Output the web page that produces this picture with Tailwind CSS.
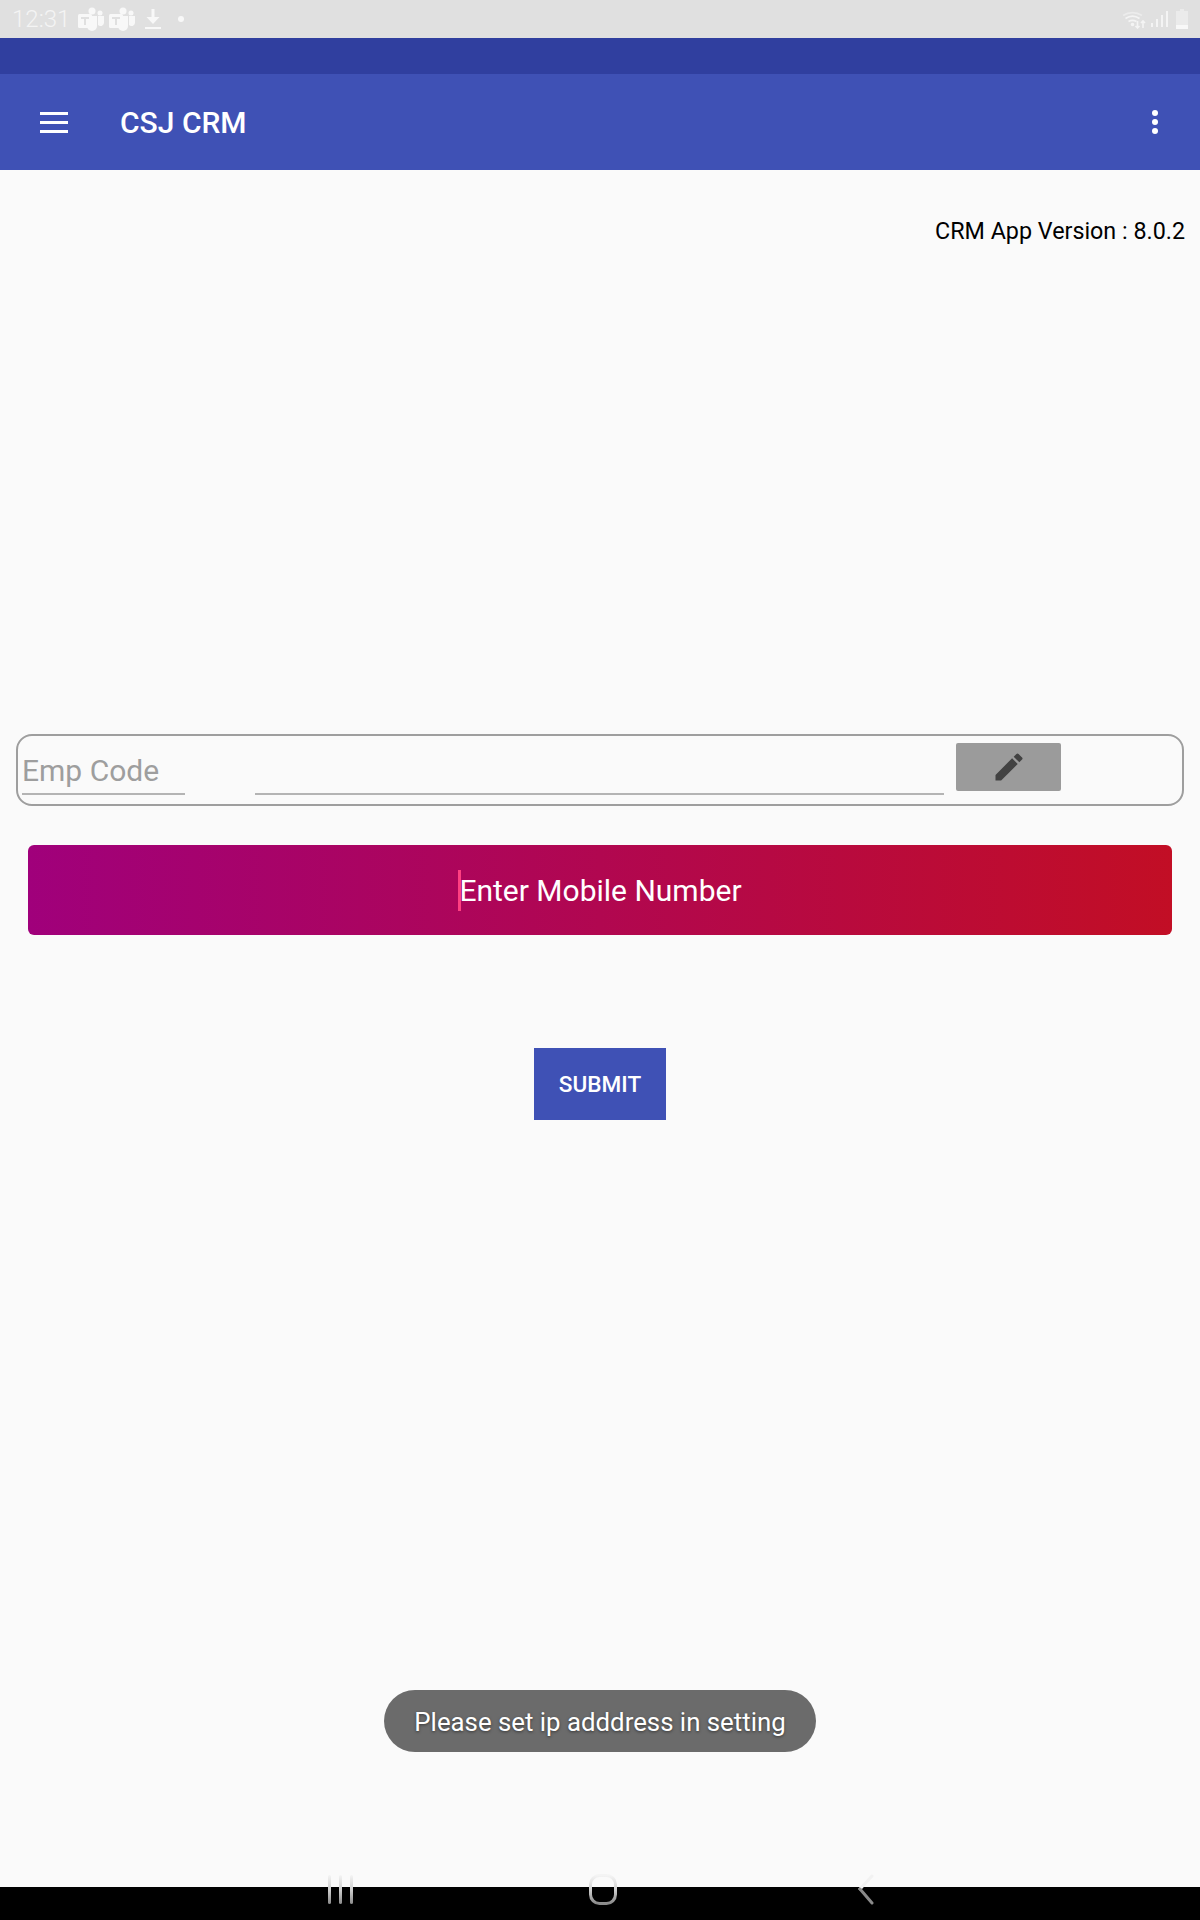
<!DOCTYPE html>
<html lang="en">
<head>
    <meta charset="UTF-8">
    <meta name="viewport" content="width=device-width, initial-scale=1.0">
    <title>CSJ CRM</title>
    <script src="https://cdn.jsdelivr.net/npm/@tailwindcss/browser@4"></script>
</head>
<body class="font-['Roboto',sans-serif]">
<div class="relative w-[1200px] h-[1920px] flex flex-col bg-[#fafafa] overflow-hidden">

    <!-- status bar -->
    <div class="h-[38px] bg-[#e0e0e0] flex items-center justify-between pl-[12px] pr-[12px] text-[#f4f4f4]">
        <div class="flex items-center">
            <span class="text-[24px] leading-none font-light">12:31</span>
            <svg class="ml-[8px]" width="26" height="24" viewBox="0 0 26 24" fill="#f8f8f8"><circle cx="14" cy="4" r="3.5"/><circle cx="22" cy="6" r="2.5"/><path d="M9 9h10v10a5 5 0 0 1-10 0z"/><path d="M20 9h6v7a3.5 3.5 0 0 1-6 2z"/><rect x="0" y="7" width="14" height="14" rx="1.5"/><path d="M3 10h8v2H8v6H6v-6H3z" fill="#e0e0e0"/></svg>
            <svg class="ml-[5px]" width="26" height="24" viewBox="0 0 26 24" fill="#f8f8f8"><circle cx="14" cy="4" r="3.5"/><circle cx="22" cy="6" r="2.5"/><path d="M9 9h10v10a5 5 0 0 1-10 0z"/><path d="M20 9h6v7a3.5 3.5 0 0 1-6 2z"/><rect x="0" y="7" width="14" height="14" rx="1.5"/><path d="M3 10h8v2H8v6H6v-6H3z" fill="#e0e0e0"/></svg>
            <svg class="ml-[10px]" width="16" height="22" viewBox="0 0 16 22" fill="#f8f8f8"><path d="M6.5 1h3v8h5l-6.5 7-6.5-7h5z"/><rect x="0" y="19" width="16" height="2"/></svg>
            <span class="ml-[17px] w-[6px] h-[6px] rounded-full bg-[#f8f8f8]"></span>
        </div>
        <div class="flex items-center">
            <svg width="24" height="20" viewBox="0 0 24 20" fill="none" stroke="#f4f4f4" stroke-width="1.6"><path d="M1 6.5a17 17 0 0 1 19 0" opacity=".6"/><path d="M3.5 9.5a12.5 12.5 0 0 1 14 0"/><path d="M6.5 12.5a8 8 0 0 1 8 0"/><circle cx="10.5" cy="15.5" r="1" fill="#f4f4f4"/><path d="M15.5 12v7M13.5 17l2 2 2-2M21 19v-7M19 14l2-2 2 2"/></svg>
            <svg class="ml-[5px]" width="17" height="18" viewBox="0 0 17 18" fill="#f4f4f4"><rect x="0" y="13" width="2" height="4"/><rect x="5" y="9" width="2" height="8"/><rect x="10" y="5" width="2" height="12"/><rect x="15" y="1" width="2" height="16"/></svg>
            <svg class="ml-[8px]" width="12" height="20" viewBox="0 0 12 20"><path d="M4 0h4v2h4v18H0V2h4z" fill="#ebebeb"/><rect x="0" y="16" width="12" height="4" fill="#f8f8f8"/></svg>
        </div>
    </div>
    <div class="h-[36px] bg-[#303f9f]"></div>

    <!-- app bar -->
    <div class="h-[96px] bg-[#3f51b5] flex items-center text-white">
        <div class="ml-[40px] w-[28px] flex flex-col gap-[6px]">
            <div class="h-[3px] bg-white"></div>
            <div class="h-[3px] bg-white"></div>
            <div class="h-[3px] bg-white"></div>
        </div>
        <div class="ml-[52px] pt-[1px] text-[30px] font-medium leading-none">CSJ CRM</div>
        <div class="ml-auto mr-[42px] flex flex-col gap-[3px]">
            <span class="w-[6px] h-[6px] rounded-full bg-white"></span>
            <span class="w-[6px] h-[6px] rounded-full bg-white"></span>
            <span class="w-[6px] h-[6px] rounded-full bg-white"></span>
        </div>
    </div>

    <!-- content -->
    <div class="flex-1 flex flex-col">
        <div class="mt-[47px] pr-[15px] text-right text-[23.3px] leading-[28px] text-black">CRM App Version : 8.0.2</div>

        <div class="mt-[489px] mx-[16px] h-[72px] border-2 border-[#9e9e9e] rounded-[16px] flex items-start">
            <div class="ml-[4px] w-[163px] h-[59px] border-b-2 border-[#b4b4b4] text-[30px] leading-[45px] pt-[12px] text-[#9e9e9e]">Emp Code</div>
            <div class="ml-[70px] w-[689px] h-[59px] border-b-2 border-[#b4b4b4]"></div>
            <div class="ml-[12px] mt-[7px] w-[105px] h-[48px] bg-[#9b9b9b] rounded-[2px] flex items-center justify-center">
                <svg width="36" height="36" viewBox="0 0 24 24" fill="#424242"><path d="M3 17.25V21h3.75L17.81 9.94l-3.75-3.75L3 17.25zM20.71 7.04a1 1 0 0 0 0-1.41l-2.34-2.34a1 1 0 0 0-1.41 0l-1.83 1.83 3.75 3.75 1.83-1.83z"/></svg>
            </div>
        </div>

        <div class="mt-[39px] mx-[28px] h-[90px] rounded-[6px] bg-linear-to-r/srgb from-[#a0007b] to-[#c20e25] flex items-center justify-center text-white text-[30px]">
            <span class="relative pl-[1px]">
                <span class="absolute left-0 top-[2px] w-[3px] h-[41px] bg-[#ff4081]"></span>
                Enter Mobile Number
            </span>
        </div>

        <div class="mt-[113px] self-center w-[132px] h-[72px] pt-[2px] bg-[#3f51b5] text-white text-[22.6px] font-medium flex items-center justify-center">SUBMIT</div>
    </div>

    <!-- toast -->
    <div class="absolute left-[384px] top-[1690px] w-[432px] h-[62px] pt-[2px] rounded-full bg-[#6b6b6b] text-white text-[25.8px] flex items-center justify-center [text-shadow:0_1px_3px_rgba(0,0,0,0.5)]">Please set ip adddress in setting</div>

    <!-- nav bar -->
    <div class="h-[33px] bg-black"></div>
    <div class="absolute left-[328px] top-[1875px] flex gap-[8px]">
        <span class="w-[3px] h-[29px] rounded-full bg-gradient-to-b from-[#f4f4f4] via-[#d0d0d0] to-[#8a8a8a]"></span>
        <span class="w-[3px] h-[29px] rounded-full bg-gradient-to-b from-[#f4f4f4] via-[#d0d0d0] to-[#8a8a8a]"></span>
        <span class="w-[3px] h-[29px] rounded-full bg-gradient-to-b from-[#f4f4f4] via-[#d0d0d0] to-[#8a8a8a]"></span>
    </div>
    <svg class="absolute left-[589px] top-[1874px]" width="28" height="31" viewBox="0 0 28 31" fill="none">
        <defs><linearGradient id="navfade" x1="0" y1="0" x2="0" y2="1"><stop offset="0" stop-color="#f4f4f4"/><stop offset=".45" stop-color="#d6d6d6"/><stop offset="1" stop-color="#8a8a8a"/></linearGradient></defs>
        <rect x="1.5" y="1.5" width="25" height="28" rx="9" stroke="url(#navfade)" stroke-width="3"/>
    </svg>
    <svg class="absolute left-[858px] top-[1874px]" width="16" height="31" viewBox="0 0 16 31" fill="none" stroke-width="3" stroke-linecap="round">
        <path d="M14 2 2 15" stroke="#f2f2f2"/>
        <path d="M2 15l12 14" stroke="#8a8a8a"/>
    </svg>
</div>
</body>
</html>
